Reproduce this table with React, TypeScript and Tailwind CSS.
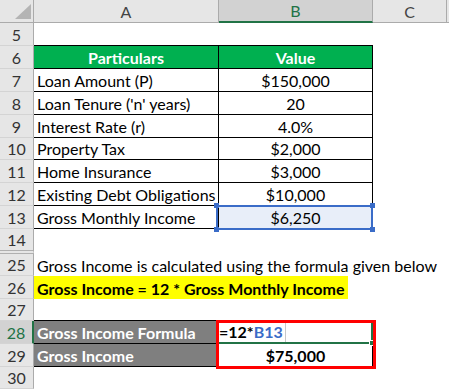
import React from "react";

type RowProps = {
  n?: string;
  h: string;
  active?: boolean;
  dbl?: boolean;
  children?: React.ReactNode;
};

function Row({ n, h, active, dbl, children }: RowProps) {
  return (
    <div className={`grid grid-cols-[34px_185px_154px_74px_1fr] ${h}`}>
      <div
        className={`flex items-end justify-center pb-[1px] text-[16px] leading-[19px] ${
          active
            ? "bg-[#d2d2d2] text-[#217346] border-r-2 border-r-[#217346]"
            : "bg-[#e6e6e6] text-[#333333] border-r border-r-[#ababab]"
        } ${dbl ? "border-b-4 border-double border-b-[#b0b0b0]" : "border-b border-b-[#d4d4d4]"}`}
      >
        {n}
      </div>
      {children}
    </div>
  );
}

const cellTxt = "flex items-end pb-[1px] text-[16px] leading-[19px]";

function DataRow({ n, h, label, value }: { n: string; h: string; label: string; value: string }) {
  return (
    <Row n={n} h={h}>
      <div className={`${cellTxt} pl-[3px] border-b border-r border-black text-black whitespace-nowrap`}>{label}</div>
      <div className={`${cellTxt} justify-center border-b border-r border-black text-black`}>{value}</div>
      <div />
      <div />
    </Row>
  );
}

export default function App() {
  return (
    <div className="w-[449px] h-[389px] overflow-hidden bg-white font-[Lato,'Liberation_Sans',sans-serif]">
      {/* column header */}
      <div className="grid grid-cols-[34px_185px_154px_74px_1fr] h-[23px] text-[16px] leading-[19px]">
        <div className="relative bg-[#e6e6e6] border-r border-b border-[#ababab]">
          <svg className="absolute left-[15px] top-[4px]" width="16" height="15" viewBox="0 0 16 15">
            <polygon points="16,0 16,15 0,15" fill="#b4b4b4" />
          </svg>
        </div>
        <div className="flex items-center justify-center bg-[#e6e6e6] border-r border-b border-[#ababab] text-[#444444]">A</div>
        <div className="flex items-center justify-center bg-[#d2d2d2] border-r border-r-[#ababab] border-b-2 border-b-[#217346] text-[#217346]">B</div>
        <div className="flex items-center justify-center bg-[#e6e6e6] border-r border-b border-[#ababab] text-[#444444]">C</div>
        <div className="bg-[#e6e6e6] border-b border-[#ababab]" />
      </div>

      <Row n="5" h="h-[23px]">
        <div className="border-b border-black" />
        <div className="border-b border-black" />
        <div />
        <div />
      </Row>

      <Row n="6" h="h-[23px]">
        <div className={`${cellTxt} justify-center bg-[#00b050] border-b border-r border-black text-white font-bold`}>Particulars</div>
        <div className={`${cellTxt} justify-center bg-[#00b050] border-b border-r border-black text-white font-bold`}>Value</div>
        <div />
        <div />
      </Row>

      <DataRow n="7" h="h-[23px]" label="Loan Amount (P)" value="$150,000" />
      <DataRow n="8" h="h-[23px]" label="Loan Tenure ('n' years)" value="20" />
      <DataRow n="9" h="h-[23px]" label="Interest Rate (r)" value="4.0%" />
      <DataRow n="10" h="h-[22px]" label="Property Tax" value="$2,000" />
      <DataRow n="11" h="h-[23px]" label="Home Insurance" value="$3,000" />
      <DataRow n="12" h="h-[23px]" label="Existing Debt Obligations" value="$10,000" />

      <Row n="13" h="h-[23px]">
        <div className={`${cellTxt} pl-[3px] border-b border-r border-black text-black whitespace-nowrap`}>Gross Monthly Income</div>
        <div className={`${cellTxt} relative justify-center bg-[#e8eef9] border-b border-r border-black text-black`}>
          $6,250
          <div className="absolute -left-[3px] -top-[1px] -right-[1px] -bottom-[2px] border-2 border-[#3a6cc8]" />
          <div className="absolute -left-[5px] -top-[3px] w-[5px] h-[5px] bg-[#3a6cc8]" />
          <div className="absolute -right-[3px] -top-[3px] w-[5px] h-[5px] bg-[#3a6cc8]" />
          <div className="absolute -left-[5px] -bottom-[4px] w-[5px] h-[5px] bg-[#3a6cc8]" />
          <div className="absolute -right-[3px] -bottom-[4px] w-[5px] h-[5px] bg-[#3a6cc8]" />
        </div>
        <div />
        <div />
      </Row>

      <Row n="14" h="h-[25px]" dbl>
        <div />
        <div />
        <div />
        <div />
      </Row>

      <Row n="25" h="h-[22px]">
        <div className={`${cellTxt} col-span-4 pl-[3px] text-black whitespace-nowrap`}>
          Gross Income is calculated using the formula given below
        </div>
      </Row>

      <Row n="26" h="h-[23px]">
        <div className="col-span-4 flex">
          <div className={`${cellTxt} bg-[#ffff00] px-[3px] text-black font-bold whitespace-nowrap`}>
            Gross Income = 12 * Gross Monthly Income
          </div>
        </div>
      </Row>

      <Row n="27" h="h-[22px]">
        <div className="border-b border-black" />
        <div className="border-b border-black" />
        <div />
        <div />
      </Row>

      <Row n="28" h="h-[23px]" active>
        <div className={`${cellTxt} pl-[3px] bg-[#7f7f7f] border-b border-r border-black text-white font-bold whitespace-nowrap`}>
          Gross Income Formula
        </div>
        <div className="relative flex border-b-2 border-b-[#217346] border-r-2 border-r-[#217346]">
          <div className={`${cellTxt} pr-[2px] border-r border-r-[#c8c8c8] font-bold text-black`}>
            =12*<span className="text-[#3a6cc8]">B13</span>
          </div>
          <div className="absolute -right-[4px] -bottom-[4px] w-[6px] h-[6px] bg-[#217346] border border-white" />
          <div className="absolute -left-[3px] -top-[1px] w-[160px] h-[49px] border-[3px] border-[#ff0000] z-10" />
        </div>
        <div />
        <div />
      </Row>

      <Row n="29" h="h-[23px]">
        <div className={`${cellTxt} pl-[3px] bg-[#7f7f7f] border-b border-r border-black text-white font-bold whitespace-nowrap`}>
          Gross Income
        </div>
        <div className={`${cellTxt} justify-center border-b border-r border-black text-black font-bold`}>$75,000</div>
        <div />
        <div />
      </Row>

      <Row n="30" h="h-[22px]">
        <div />
        <div />
        <div />
        <div />
      </Row>
    </div>
  );
}
